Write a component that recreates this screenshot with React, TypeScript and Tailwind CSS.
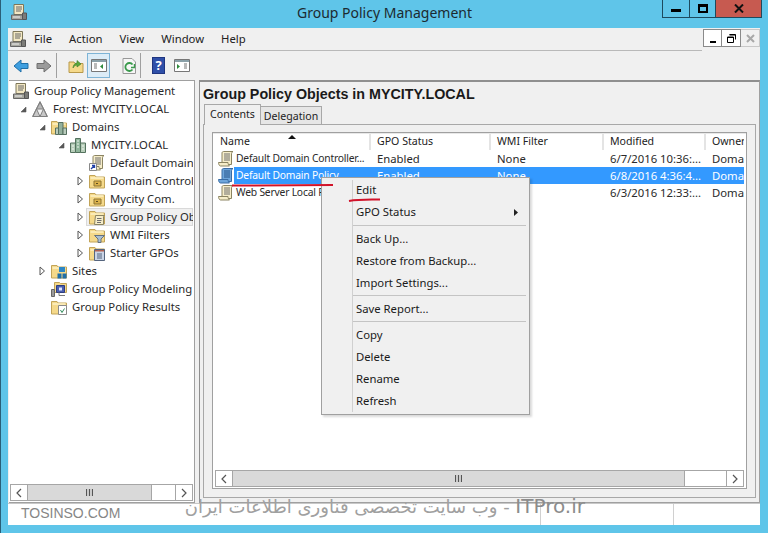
import { ReactNode } from "react";

const uiFont = "font-['Noto_Sans',sans-serif]";

function ConsoleIcon({ className = "" }: { className?: string }) {
  return (
    <svg viewBox="0 0 16 16" className={`w-[16px] h-[16px] ${className}`}>
      <path d="M3 .5h9.5v10H3z" fill="#f3e8c4" stroke="#7d7658" strokeWidth="1" />
      <path d="M5 3h6M5 5h6M5 7h5" stroke="#666" strokeWidth="1" />
      <path d="M.5 11h11v4.5H.5z" fill="#a8a8a0" stroke="#666" strokeWidth="1" />
      <path d="M11.5 9h4v6.5h-4z" fill="#7c7c78" stroke="#555" strokeWidth="1" />
      <path d="M2 13h7" stroke="#eee" strokeWidth="1" />
    </svg>
  );
}

function ScrollIcon({ blue = false, link = false }: { blue?: boolean; link?: boolean }) {
  const fill = blue ? "#6ea6dc" : "#f6edc9";
  const edge = blue ? "#3a6ca4" : "#8b8462";
  const line = blue ? "#27548a" : "#6f6f6f";
  return (
    <svg viewBox="0 0 16 16" className="w-[16px] h-[16px] shrink-0">
      <path d="M5.5.5H15c-1 .5-1.5 1.5-1.5 2.5v10.500H2.500c1-.5 1.500-1.500 1.500-2.500V2c0-.8.7-1.500 1.500-1.500z" fill={fill} stroke={edge} strokeWidth="1" />
      <path d="M.5 11.500H10c0 1.500.5 2.500 1.500 3.500h-9C1.300 15 .5 13 .5 11.500z" fill={fill} stroke={edge} strokeWidth="1" />
      <path d="M6 3h6M6 5h6M6 7h6M6 9h6" stroke={line} strokeWidth="1" />
      {link && (
        <g>
          <path d="M.5 8.500h7v7h-7z" fill="#fff" stroke="#888" strokeWidth="1" />
          <path d="M2 14l3.500-3.500M3 10.500h2.500V13" stroke="#1f3fa8" strokeWidth="1.3" fill="none" />
        </g>
      )}
    </svg>
  );
}

function Folder({ children }: { children?: ReactNode }) {
  return (
    <svg viewBox="0 0 16 16" className="w-[16px] h-[16px] shrink-0">
      <path d="M.5 2.500H6L7 4h8.500v11H.5z" fill="#f5d98a" stroke="#c2a458" strokeWidth="1" />
      <path d="M1.500 5h13" stroke="#fdf0c4" strokeWidth="1.5" />
      {children}
    </svg>
  );
}

const treeIcons: Record<string, ReactNode> = {
  console: <ConsoleIcon className="shrink-0" />,
  forest: (
    <svg viewBox="0 0 16 16" className="w-[16px] h-[16px] shrink-0">
      <path d="M8 .5l7.500 15H.5z" fill="#f2f2f2" stroke="#808080" strokeWidth="1" />
      <path d="M8 1.500L11.500 8h-7z" fill="#b8b8b8" stroke="#808080" strokeWidth="1" />
      <path d="M4.500 8L8 15.500H1zM11.500 8L15 15.500H8z" fill="#c8c8c8" stroke="#808080" strokeWidth="1" />
    </svg>
  ),
  domains: (
    <Folder>
      <path d="M7.500 3.500H12v12H7.500z" fill="#93b09c" stroke="#567060" strokeWidth="1" />
      <path d="M4.500 9h3v6.500h-3zM12 9h3.500v6.500H12z" fill="#b9cbbc" stroke="#567060" strokeWidth="1" />
    </Folder>
  ),
  domain: (
    <svg viewBox="0 0 16 16" className="w-[16px] h-[16px] shrink-0">
      <path d="M5.500 1.500h5v14h-5z" fill="#8fb59a" stroke="#54725e" strokeWidth="1" />
      <path d="M.5 6h5v9.500h-5zM10.500 6h5v9.500h-5z" fill="#b7cdb9" stroke="#54725e" strokeWidth="1" />
      <path d="M7 4h2M7 7h2M7 10h2M2 9h2M2 12h2M12 9h2M12 12h2" stroke="#eef6ef" strokeWidth="1" />
    </svg>
  ),
  gpoLink: <ScrollIcon link />,
  ou: (
    <Folder>
      <path d="M5 8h7v5H5z" fill="#dcb24c" stroke="#8c7434" strokeWidth="1" />
      <path d="M7 10.500h2" stroke="#5c4c20" strokeWidth="1" />
    </Folder>
  ),
  gpos: (
    <Folder>
      <path d="M6.500 6.500h9l-1 1v8h-9z" fill="#f6edc9" stroke="#8b8462" strokeWidth="1" />
      <path d="M8 9.500h4.500M8 11.500h4.500M8 13.500h4" stroke="#6f6f6f" strokeWidth="1" />
    </Folder>
  ),
  wmi: (
    <Folder>
      <path d="M5.500 8.500h10L12 12v3.500H9V12z" fill="#a9bfd4" stroke="#66727e" strokeWidth="1" />
    </Folder>
  ),
  starter: (
    <Folder>
      <path d="M5.500 4.500h10v11h-10z" fill="#c9d4e6" stroke="#55657e" strokeWidth="1" />
      <path d="M6 5h9v1.500H6z" fill="#b06050" />
      <path d="M8 9h5M8 11h5M8 13h5" stroke="#55657e" strokeWidth="1" />
    </Folder>
  ),
  sites: (
    <Folder>
      <path d="M8 4h6v5H8z" fill="#2c86c4" />
      <path d="M6.500 10.500h4v5h-4zM11.500 10.500h4v5h-4z" fill="#1f6ea8" />
    </Folder>
  ),
  modeling: (
    <svg viewBox="0 0 16 16" className="w-[16px] h-[16px] shrink-0">
      <path d="M3.500 1.500h5l1 1h6v9h-12z" fill="#f5d98a" stroke="#c2a458" strokeWidth="1" />
      <path d="M5.500 4.500h8v7h-8z" fill="#4a5fb0" stroke="#2d3c80" strokeWidth="1" />
      <path d="M8 6.500h3v3H8z" fill="#dfe6ff" />
      <path d="M.5 8.500h3v7h-3z" fill="#9a9a9a" stroke="#666" strokeWidth="1" />
      <path d="M8 11.500v3h6" stroke="#7a7a7a" strokeWidth="1" fill="none" />
    </svg>
  ),
  results: (
    <Folder>
      <path d="M7.500 6.500h8v9h-8z" fill="#fff" stroke="#8a8a8a" strokeWidth="1" />
      <path d="M9.500 11l1.500 2.500 2.500-4" stroke="#2f8a5a" strokeWidth="1" fill="none" />
    </Folder>
  ),
};

const treeRows = [
  { label: "Group Policy Management", icon: "console", pad: "pl-[4px]" },
  { label: "Forest: MYCITY.LOCAL", icon: "forest", pad: "pl-[4px]", caret: "open" },
  { label: "Domains", icon: "domains", pad: "pl-[23px]", caret: "open" },
  { label: "MYCITY.LOCAL", icon: "domain", pad: "pl-[42px]", caret: "open" },
  { label: "Default Domain Policy", icon: "gpoLink", pad: "pl-[61px]", caret: "none" },
  { label: "Domain Controllers", icon: "ou", pad: "pl-[61px]", caret: "closed" },
  { label: "Mycity Com.", icon: "ou", pad: "pl-[61px]", caret: "closed" },
  { label: "Group Policy Objects", icon: "gpos", pad: "pl-[61px]", caret: "closed", active: true },
  { label: "WMI Filters", icon: "wmi", pad: "pl-[61px]", caret: "closed" },
  { label: "Starter GPOs", icon: "starter", pad: "pl-[61px]", caret: "closed" },
  { label: "Sites", icon: "sites", pad: "pl-[23px]", caret: "closed" },
  { label: "Group Policy Modeling", icon: "modeling", pad: "pl-[23px]", caret: "none" },
  { label: "Group Policy Results", icon: "results", pad: "pl-[23px]", caret: "none" },
];

function Caret({ kind }: { kind: string }) {
  return (
    <span className="w-[19px] shrink-0 flex pl-[7px]">
      {kind === "open" && (
        <svg viewBox="0 0 7 7" className="w-[7px] h-[7px]">
          <path d="M6 1v5H1z" fill="#595959" stroke="#595959" strokeWidth="0.6" />
        </svg>
      )}
      {kind === "closed" && (
        <svg viewBox="0 0 7 10" className="w-[7px] h-[10px]">
          <path d="M1 1l4.500 4L1 9z" fill="#fff" stroke="#555" strokeWidth="1" />
        </svg>
      )}
    </span>
  );
}

function ScrollBar({ thumb }: { thumb: string }) {
  return (
    <div className="h-[17px] flex border border-[#a6a6a6] bg-white shrink-0">
      <div className="w-[17px] shrink-0 flex items-center justify-center border-r border-[#a6a6a6]">
        <svg viewBox="0 0 6 10" className="w-[6px] h-[10px]"><path d="M5 1L1 5l4 4" fill="none" stroke="#555" strokeWidth="1.2" /></svg>
      </div>
      <div className={`${thumb} bg-[#d9d9d9] border-r border-[#a6a6a6] flex items-center justify-center`}>
        <svg viewBox="0 0 7 7" className="w-[7px] h-[7px]"><path d="M.5 0v7M3.500 0v7M6.500 0v7" stroke="#555" strokeWidth="1.2" /></svg>
      </div>
      <div className="flex-1" />
      <div className="w-[17px] shrink-0 flex items-center justify-center border-l border-[#a6a6a6]">
        <svg viewBox="0 0 6 10" className="w-[6px] h-[10px]"><path d="M1 1l4 4-4 4" fill="none" stroke="#555" strokeWidth="1.2" /></svg>
      </div>
    </div>
  );
}

const listRows = [
  { name: "Default Domain Controller...", mod: "6/7/2016 10:36:..." },
  { name: "Default Domain Policy", mod: "6/8/2016 4:36:4...", selected: true },
  { name: "Web Server Local Policy", mod: "6/3/2016 12:33:..." },
];

const menuGroups = [
  { gap: "", items: ["Edit", "GPO Status"] },
  { gap: "mt-[2px]", items: ["Back Up...", "Restore from Backup...", "Import Settings..."] },
  { gap: "mt-[1px]", items: ["Save Report..."] },
  { gap: "mt-[1px]", items: ["Copy", "Delete", "Rename", "Refresh"] },
];

function TitleButton({ className, children }: { className: string; children: ReactNode }) {
  return <div className={`h-[18px] flex items-center justify-center border-b border-r border-[#1d4a5e] ${className}`}>{children}</div>;
}

function ToolSep() {
  return <div className="w-px h-[25px] bg-[#a0a0a0]" />;
}

export default function App() {
  return (
    <div className={`relative w-[768px] h-[533px] overflow-hidden bg-[#5fc5e9] border-l border-[#2a5f78] text-[11.3px] text-[#222] ${uiFont}`}>
      {/* title bar */}
      <div className="h-[28px] flex items-start">
        <ConsoleIcon className="mt-[4px] ml-[10px]" />
        <div className="flex-1 pt-[2px] pl-[80px] text-center text-[14px] text-[#1c2a30]">Group Policy Management</div>
        <div className="flex mr-[6px]">
          <TitleButton className="w-[28px] border-l">
            <div className="w-[10px] h-[3px] bg-black mt-[4px]" />
          </TitleButton>
          <TitleButton className="w-[26px]">
            <div className="w-[10px] h-[9px] border-2 border-black border-t-[3px]" />
          </TitleButton>
          <TitleButton className="w-[46px] bg-[#c75a50]">
            <svg viewBox="0 0 10 9" className="w-[10px] h-[9px]"><path d="M1 .5l8 8M9 .5l-8 8" stroke="#111" strokeWidth="2" /></svg>
          </TitleButton>
        </div>
      </div>

      <div className="ml-[7px] mr-[8px] flex flex-col h-[497px] bg-[#f0f0f0]">
        {/* menu bar */}
        <div className="h-[23px] flex items-center relative shrink-0">
          <div className="flex-1 h-full flex items-center border-b border-[#b9b9b9] mr-[58px]">
            <ConsoleIcon className="ml-[2px]" />
            <div className="flex gap-[17px] ml-[8px] text-[#222]">
              <span>File</span>
              <span>Action</span>
              <span>View</span>
              <span>Window</span>
              <span>Help</span>
            </div>
          </div>
          <div className="absolute right-0 top-[1px] flex">
            <div className="w-[19px] h-[18px] border border-[#8a8a8a] bg-white flex items-end justify-center pb-[3px]"><div className="w-[6px] h-[2px] bg-black" /></div>
            <div className="w-[19px] h-[18px] border border-[#8a8a8a] border-l-0 bg-white flex items-center justify-center">
              <svg viewBox="0 0 9 9" className="w-[9px] h-[9px]"><path d="M2.500.5h6v5M.5 3h6v5.500h-6z" fill="none" stroke="#000" strokeWidth="1" /><path d="M.5 3.500h6M2.500 1h6" stroke="#000" strokeWidth="1" /></svg>
            </div>
            <div className="w-[19px] h-[18px] border border-[#c8c8c8] border-l-0 flex items-center justify-center">
              <svg viewBox="0 0 9 9" className="w-[9px] h-[9px]"><path d="M1 1l7 7M8 1l-7 7" stroke="#a8a8a8" strokeWidth="2" /></svg>
            </div>
          </div>
        </div>

        {/* toolbar */}
        <div className="h-[29px] shrink-0 flex items-center pl-[5px]">
          <svg viewBox="0 0 16 14" className="w-[16px] h-[14px]"><path d="M1 7l7-6v3.500h7v5H8V13z" fill="#3f9fe0" stroke="#1f6fa8" strokeWidth="1" /></svg>
          <svg viewBox="0 0 16 14" className="w-[16px] h-[14px] ml-[7px]"><path d="M15 7L8 1v3.500H1v5h7V13z" fill="#9a9a9a" stroke="#6e6e6e" strokeWidth="1" /></svg>
          <div className="ml-[4px]"><ToolSep /></div>
          <svg viewBox="0 0 16 16" className="w-[16px] h-[16px] ml-[11px]">
            <path d="M1 4h5l1 1.500h8v9H1z" fill="#f5d98a" stroke="#b8994a" strokeWidth="1" />
            <path d="M5 10c0-3 2-5 4-5V2.500L13 6l-4 3V7c-1.500 0-3 1-4 3z" fill="#5aa83c" stroke="#3c7c28" strokeWidth="0.6" />
          </svg>
          <div className="w-[23px] h-[25px] ml-[3px] bg-[#dcecf7] border border-[#7eb4d6] flex items-center justify-center">
            <svg viewBox="0 0 16 13" className="w-[16px] h-[13px]">
              <path d="M.5.5h15v12H.5z" fill="#fff" stroke="#777" />
              <path d="M1 1h14v2H1z" fill="#8aa0a8" />
              <path d="M3 5h3M3 7h3M3 9h3" stroke="#777" />
              <path d="M12 5v5L9 7.500z" fill="#2f8a3c" />
            </svg>
          </div>
          <svg viewBox="0 0 14 16" className="w-[14px] h-[16px] ml-[12px]">
            <path d="M1 .5h9L13.500 4v11.500H1z" fill="#f6f6f6" stroke="#999" />
            <path d="M10.500 6.500a4 4 0 1 0 0 5" fill="none" stroke="#3a9a4c" strokeWidth="1.8" />
            <path d="M9 9.500h3.500V6" fill="none" stroke="#3a9a4c" strokeWidth="1.4" />
          </svg>
          <div className="ml-[4px]"><ToolSep /></div>
          <div className="ml-[11px] w-[13px] h-[17px] bg-[#2f4fa8] border border-[#1f3580] text-white text-[13px] font-bold leading-[15px] text-center">?</div>
          <svg viewBox="0 0 16 13" className="w-[16px] h-[13px] ml-[9px]">
            <path d="M.5.5h15v12H.5z" fill="#fff" stroke="#777" />
            <path d="M1 1h14v2H1z" fill="#8aa0a8" />
            <path d="M3 5v5l3-2.500z" fill="#2f8a3c" />
            <path d="M10 5h3M10 7h3M10 9h3" stroke="#777" />
          </svg>
        </div>

        {/* panes */}
        <div className="flex h-[423px] shrink-0 pl-[1px]">
          <div className="w-[186px] shrink-0 flex flex-col bg-white border-t border-r border-b border-[#a0a0a0]">
            <div className="flex-1 overflow-hidden pt-[1px] pr-[1px]">
              {treeRows.map((row) => (
                <div key={row.label} className={`h-[18px] flex items-center whitespace-nowrap overflow-hidden ${row.pad} text-[#2a2a2a]`}>
                  {row.caret && <Caret kind={row.caret} />}
                  <span className={`flex items-center h-[18px] flex-1 min-w-0 ${row.active ? "bg-[#f0f0f0] border border-[#d9d9d9] -ml-[3px] pl-[2px]" : ""}`}>
                    {treeIcons[row.icon]}
                    <span className="ml-[5px]">{row.label}</span>
                  </span>
                </div>
              ))}
            </div>
            <div className="ml-[1px] mr-[1px] mb-[1px]"><ScrollBar thumb="w-[124px]" /></div>
          </div>

          <div className="w-[4px] shrink-0" />

          <div className="w-[561px] shrink-0 flex flex-col border-t-2 border-l border-[#8f8f8f] border-r border-r-[#a0a0a0] border-b border-b-[#a0a0a0]">
            <div className="h-[23px] shrink-0 pl-[3px] pt-[2px] text-[14.3px] font-bold leading-[20px] text-[#1a1a1a] font-['Liberation_Sans',sans-serif]">
              Group Policy Objects in MYCITY.LOCAL
            </div>
            <div className="h-[19px] shrink-0 flex items-end pl-[4px] relative z-10 text-[10.6px]">
              <div className="w-[57px] h-[21px] bg-[#f0f0f0] border border-b-0 border-[#a8a8a8] text-center leading-[18px] -mb-[1px]">Contents</div>
              <div className="w-[61px] h-[18px] bg-[#e6e6e6] border border-l-0 border-b-0 border-[#a8a8a8] text-center leading-[18px]">Delegation</div>
            </div>
            <div className="mx-[3px] h-[374px] shrink-0 border border-[#a8a8a8] pt-[7px] px-[8px]">
              <div className="w-[535px] h-[357px] border border-[#a0a0a0] bg-white flex flex-col">
                <div className="h-[17px] flex shrink-0 border-t border-[#e8e8e8] text-[10.6px] text-[#222] leading-[15px] whitespace-nowrap overflow-hidden">
                  <div className="relative w-[158px] shrink-0 pl-[7px] border-r-2 border-[#e4e4e4]">
                    Name
                    <svg viewBox="0 0 8 4" className="absolute left-[75px] top-[1px] w-[8px] h-[4px]"><path d="M0 4l4-4 4 4z" fill="#111" /></svg>
                  </div>
                  <div className="w-[120px] shrink-0 pl-[6px] border-r-2 border-[#e4e4e4]">GPO Status</div>
                  <div className="w-[113px] shrink-0 pl-[6px] border-r-2 border-[#e4e4e4]">WMI Filter</div>
                  <div className="w-[102px] shrink-0 pl-[6px] border-r-2 border-[#e4e4e4]">Modified</div>
                  <div className="w-[38px] shrink-0 pl-[6px] overflow-hidden">Owner</div>
                </div>
                <div className="flex-1">
                  {listRows.map((row) => (
                    <div key={row.name} className="h-[17px] flex items-center whitespace-nowrap overflow-hidden">
                      <span className="w-[21px] pl-[5px] shrink-0 overflow-hidden"><ScrollIcon blue={row.selected} /></span>
                      <div className={`flex w-[510px] h-[17px] leading-[17px] ${row.selected ? "bg-[#3399ff] text-white" : "text-[#2a2a2a]"}`}>
                        <span className="w-[137px] shrink-0 pl-[2px] overflow-hidden text-[10.3px] tracking-[-0.2px]">{row.name}</span>
                        <span className="w-[120px] shrink-0 pl-[6px]">Enabled</span>
                        <span className="w-[113px] shrink-0 pl-[6px]">None</span>
                        <span className="w-[102px] shrink-0 pl-[6px]">{row.mod}</span>
                        <span className="w-[38px] shrink-0 pl-[6px] overflow-hidden">Domain Admins</span>
                      </div>
                    </div>
                  ))}
                </div>
                <div className="mb-[1px] ml-[2px] mr-[2px]"><ScrollBar thumb="w-[452px]" /></div>
              </div>
            </div>
          </div>
        </div>

        {/* status bar */}
        <div className="h-[22px] shrink-0 bg-white flex justify-end border-t border-[#c8c8c8]">
          <div className="w-[133px] border-l border-[#d0d0d0]" />
          <div className="w-[87px] border-l border-[#d0d0d0]" />
        </div>
      </div>

      {/* context menu */}
      <div className="absolute left-[320px] top-[177px] w-[209px] h-[238px] bg-[#f0f0f0] border border-[#a0a0a0] shadow-[2px_2px_2px_rgba(0,0,0,0.15)] text-[#1a1a1a]">
        <div className="absolute left-[30px] top-[2px] bottom-[2px] w-px bg-[#d0d0d0]" />
        <div className="pt-[1px] pl-[34px] pr-[3px]">
          {menuGroups.map((group, i) => (
            <div key={group.items[0]} className={i > 0 ? `border-t border-[#c4c4c4] -ml-[3px] pl-[3px] pt-[2px] ${group.gap}` : ""}>
              {group.items.map((item) => (
                <div key={item} className="h-[22px] leading-[22px] flex items-center justify-between pr-[8px]">
                  <span>{item}</span>
                  {item === "GPO Status" && (
                    <svg viewBox="0 0 4 7" className="w-[4px] h-[7px]"><path d="M0 0l4 3.500L0 7z" fill="#222" /></svg>
                  )}
                </div>
              ))}
            </div>
          ))}
        </div>
      </div>

      {/* red hand-drawn marks */}
      <svg viewBox="0 0 768 533" className="absolute inset-0 w-[768px] h-[533px] pointer-events-none">
        <path d="M231 185.500l101-.5" stroke="#d1132a" strokeWidth="2" fill="none" />
        <path d="M348 201c10-2 20-1.500 31-1.500" stroke="#d1132a" strokeWidth="2" fill="none" />
      </svg>

      {/* watermark */}
      <div className="absolute left-[20px] top-[503px] text-[14px] text-[#868686] font-['Liberation_Sans',sans-serif] [text-shadow:0_0_1px_#fff]">TOSINSO.COM</div>
      <div dir="rtl" className="absolute left-[184px] top-[491px] w-[400px] text-[18px] whitespace-nowrap text-[#a0a0a0] font-['DejaVu_Sans',sans-serif]">
        <span dir="ltr" className="text-[20px] text-[#8c8c8c]">ITPro.ir</span> - وب سایت تخصصی فناوری اطلاعات ایران
      </div>
    </div>
  );
}
